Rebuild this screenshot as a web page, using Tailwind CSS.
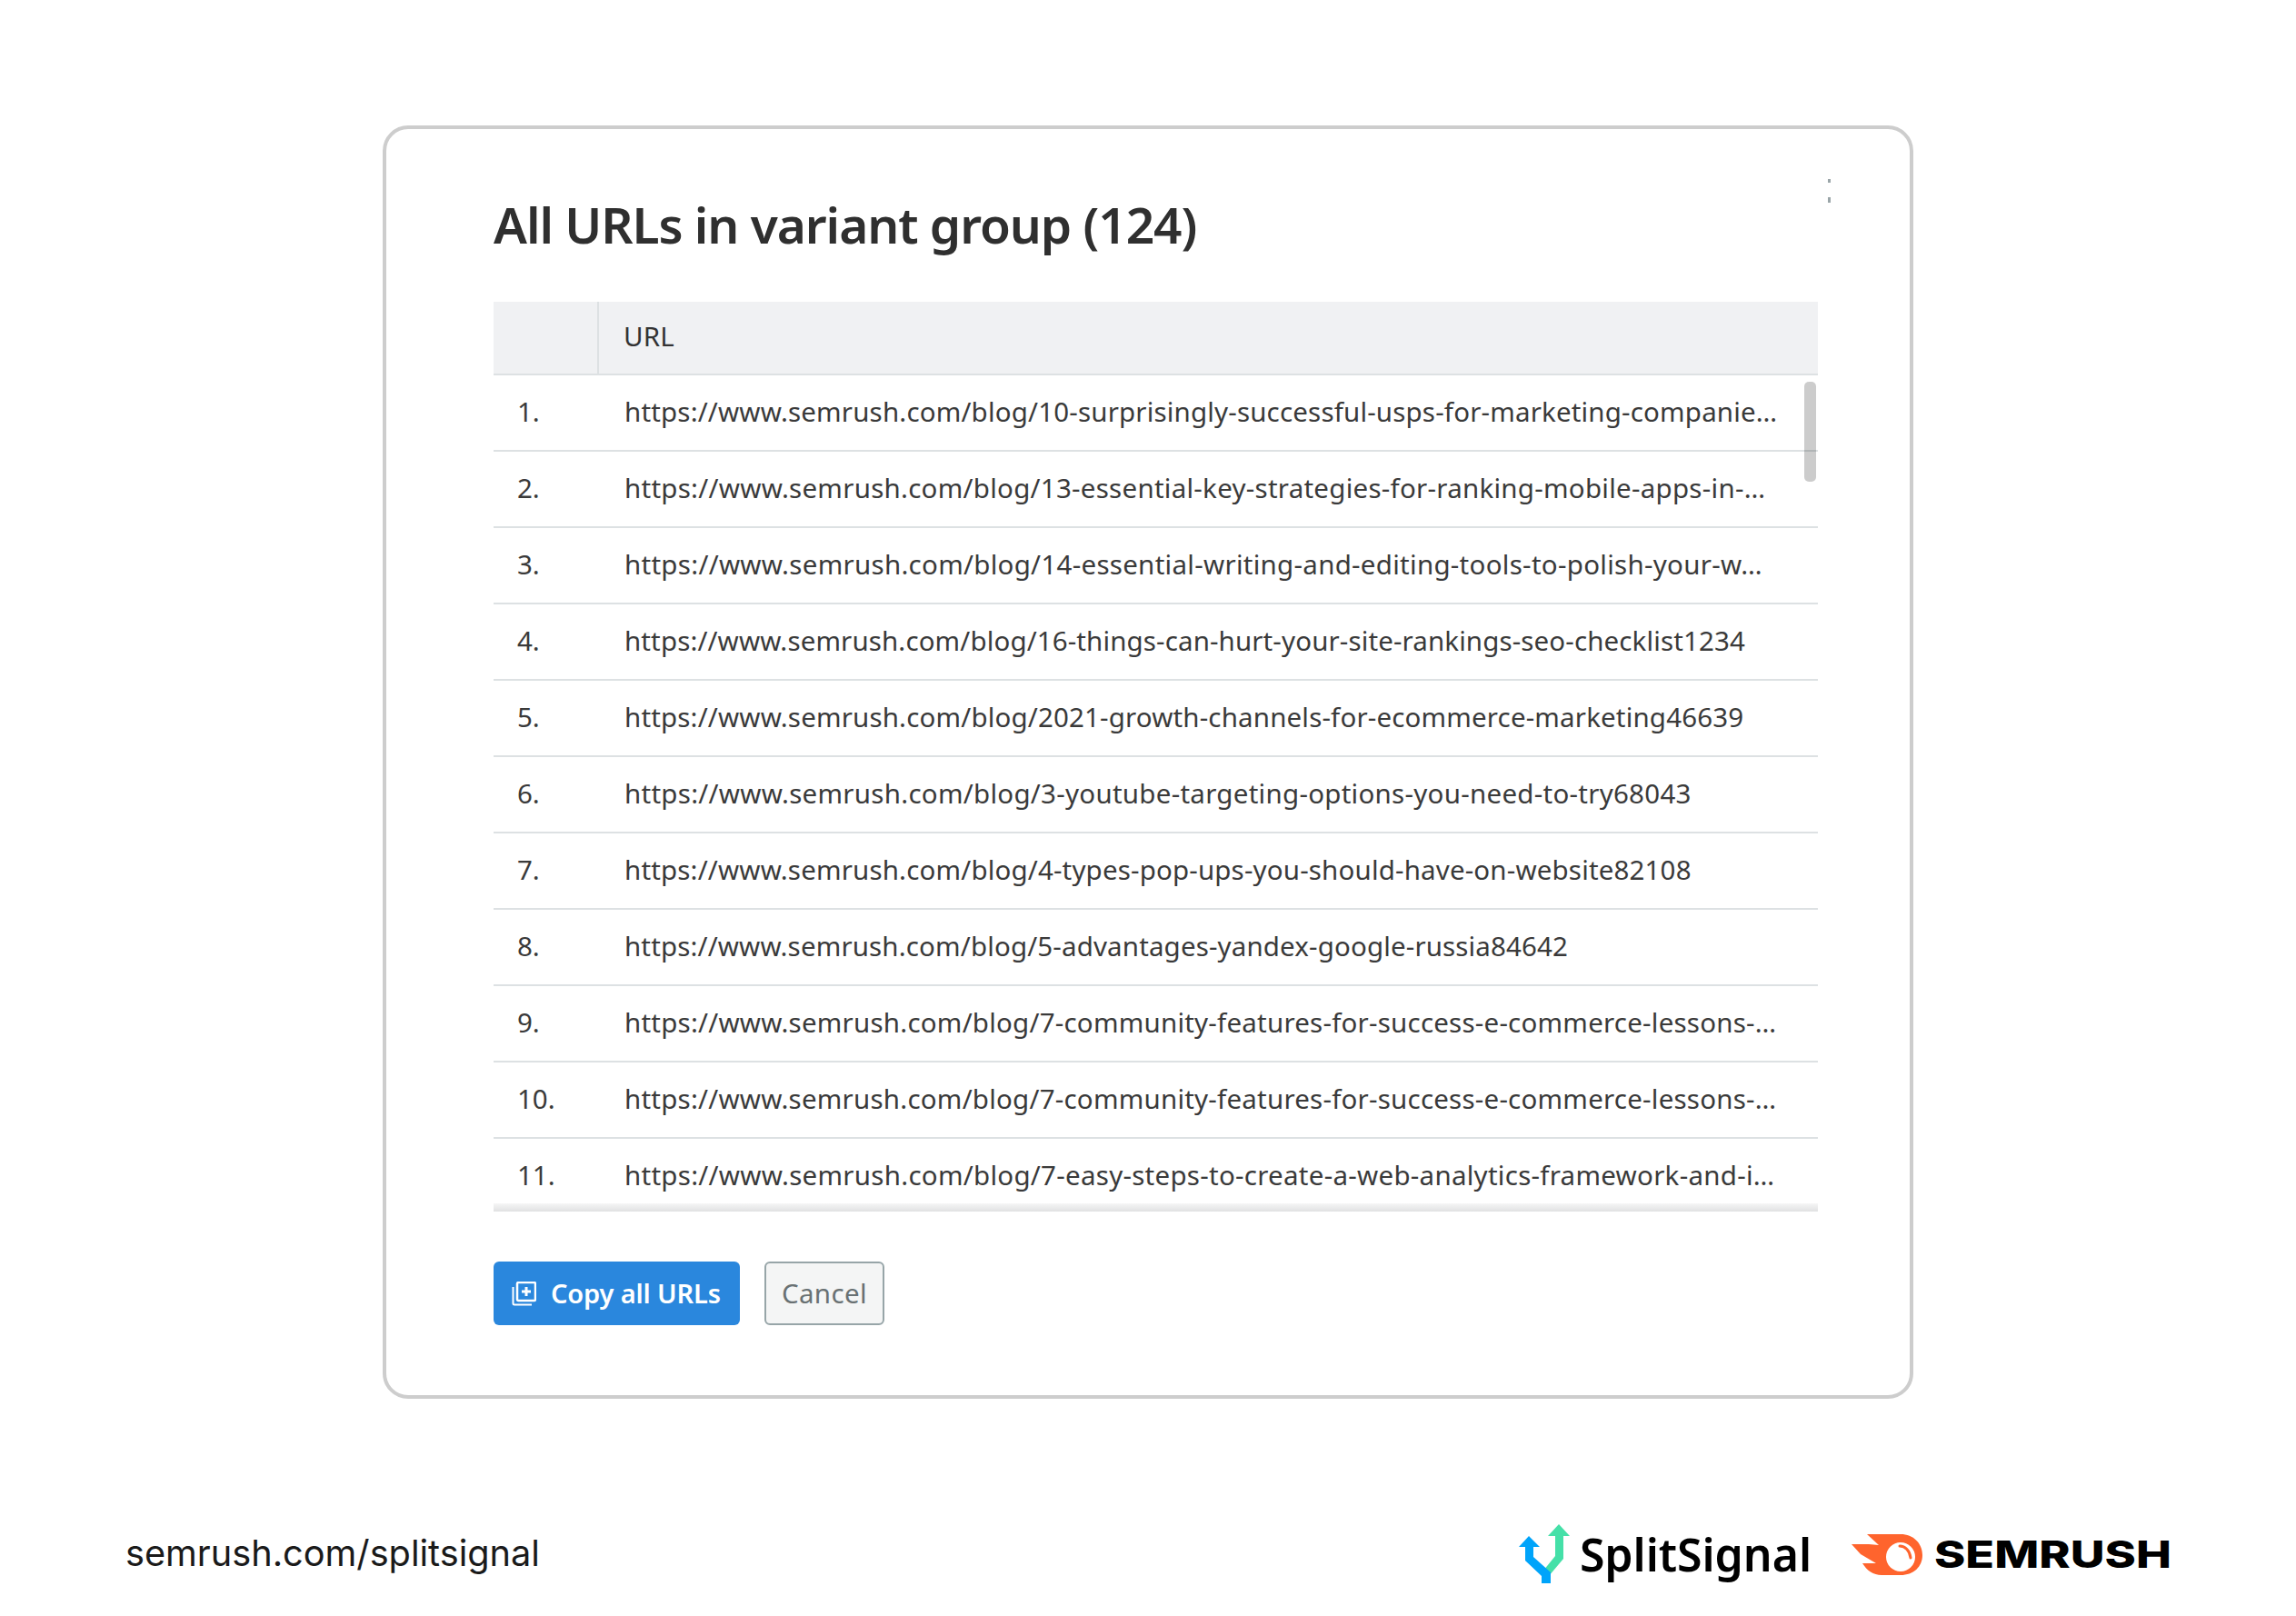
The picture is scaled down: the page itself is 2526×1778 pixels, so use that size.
<!DOCTYPE html>
<html lang="en">
<head>
<meta charset="UTF-8">
<title>All URLs in variant group</title>
<script src="https://cdn.jsdelivr.net/npm/@tailwindcss/browser@4"></script>
</head>
<body class="bg-white w-[2526px] h-[1778px] overflow-hidden font-['Noto_Sans',sans-serif] text-[#333]">
  <!-- Dialog card -->
  <div class="relative ml-[421px] mt-[138px] w-[1684px] h-[1401px] border-4 border-[#cdcdcd] rounded-[28px] pl-[118px]">
    <div class="absolute left-[1586px] top-[55px] flex flex-col gap-[16px]">
      <span class="block w-[3px] h-[4px] bg-[#9aa5a8]"></span>
      <span class="block w-[3px] h-[6px] bg-[#9aa5a8]"></span>
    </div>
    <h1 class="pt-[67px] h-[190px] text-[55px] leading-[76px] font-semibold tracking-[-1.05px] text-[#2f2f2f]">All URLs in variant group (124)</h1>

    <div class="relative w-[1457px]">
      <!-- Header -->
      <div class="flex h-[81px] bg-[#f0f1f3] border-b-2 border-[#dde1e3] text-[29.5px] tracking-[0.13px]">
        <div class="w-[116px] border-r-2 border-[#dde1e3]"></div>
        <div class="pl-[27px] leading-[76px]">URL</div>
      </div>
      <!-- Rows -->
      <div class="h-[920px] overflow-hidden text-[29.5px] text-[#3a3a3a]">
        <div class="flex h-[84px] pb-[2px] items-center border-b-2 border-[#dde1e3] whitespace-nowrap"><div class="w-[116px] pl-[26px]">1.</div><div class="pl-[28px] tracking-[0.17px]">https://www.semrush.com/blog/10-surprisingly-successful-usps-for-marketing-companie…</div></div>
        <div class="flex h-[84px] pb-[2px] items-center border-b-2 border-[#dde1e3] whitespace-nowrap"><div class="w-[116px] pl-[26px]">2.</div><div class="pl-[28px] tracking-[0.26px]">https://www.semrush.com/blog/13-essential-key-strategies-for-ranking-mobile-apps-in-…</div></div>
        <div class="flex h-[84px] pb-[2px] items-center border-b-2 border-[#dde1e3] whitespace-nowrap"><div class="w-[116px] pl-[26px]">3.</div><div class="pl-[28px] tracking-[0.28px]">https://www.semrush.com/blog/14-essential-writing-and-editing-tools-to-polish-your-w…</div></div>
        <div class="flex h-[84px] pb-[2px] items-center border-b-2 border-[#dde1e3] whitespace-nowrap"><div class="w-[116px] pl-[26px]">4.</div><div class="pl-[28px] tracking-[0.12px]">https://www.semrush.com/blog/16-things-can-hurt-your-site-rankings-seo-checklist1234</div></div>
        <div class="flex h-[84px] pb-[2px] items-center border-b-2 border-[#dde1e3] whitespace-nowrap"><div class="w-[116px] pl-[26px]">5.</div><div class="pl-[28px] tracking-[0.16px]">https://www.semrush.com/blog/2021-growth-channels-for-ecommerce-marketing46639</div></div>
        <div class="flex h-[84px] pb-[2px] items-center border-b-2 border-[#dde1e3] whitespace-nowrap"><div class="w-[116px] pl-[26px]">6.</div><div class="pl-[28px] tracking-[0.27px]">https://www.semrush.com/blog/3-youtube-targeting-options-you-need-to-try68043</div></div>
        <div class="flex h-[84px] pb-[2px] items-center border-b-2 border-[#dde1e3] whitespace-nowrap"><div class="w-[116px] pl-[26px]">7.</div><div class="pl-[28px] tracking-[0.16px]">https://www.semrush.com/blog/4-types-pop-ups-you-should-have-on-website82108</div></div>
        <div class="flex h-[84px] pb-[2px] items-center border-b-2 border-[#dde1e3] whitespace-nowrap"><div class="w-[116px] pl-[26px]">8.</div><div class="pl-[28px] tracking-[0.14px]">https://www.semrush.com/blog/5-advantages-yandex-google-russia84642</div></div>
        <div class="flex h-[84px] pb-[2px] items-center border-b-2 border-[#dde1e3] whitespace-nowrap"><div class="w-[116px] pl-[26px]">9.</div><div class="pl-[28px] tracking-[0.22px]">https://www.semrush.com/blog/7-community-features-for-success-e-commerce-lessons-…</div></div>
        <div class="flex h-[84px] pb-[2px] items-center border-b-2 border-[#dde1e3] whitespace-nowrap"><div class="w-[116px] pl-[26px]">10.</div><div class="pl-[28px] tracking-[0.22px]">https://www.semrush.com/blog/7-community-features-for-success-e-commerce-lessons-…</div></div>
        <div class="flex h-[84px] pb-[2px] items-center border-b-2 border-[#dde1e3] whitespace-nowrap"><div class="w-[116px] pl-[26px]">11.</div><div class="pl-[28px] tracking-[0.27px]">https://www.semrush.com/blog/7-easy-steps-to-create-a-web-analytics-framework-and-i…</div></div>
      </div>
      <!-- Scrollbar thumb and bottom scroll shadow -->
      <div class="absolute left-[1442px] top-[88px] w-[13px] h-[110px] rounded-[5px] bg-black/20"></div>
      <div class="absolute left-0 right-0 bottom-0 h-[9px] bg-gradient-to-b from-[#f6f6f6] to-[#e0e1e2]"></div>
    </div>

    <!-- Buttons -->
    <div class="flex gap-[27px] mt-[55px]">
      <button class="flex items-center w-[271px] h-[70px] pl-[20px] gap-[16px] rounded-[6px] bg-[#2a87dd] text-white text-[29px] font-semibold tracking-[-0.15px]">
        <svg class="w-[27px] h-[27px]" viewBox="0 0 27 27" fill="none">
          <rect x="6" y="1" width="20" height="20" rx="1.5" stroke="white" stroke-width="2.5"/>
          <path d="M16 6v10M11 11h10" stroke="white" stroke-width="3"/>
          <path d="M1.5 6v18a1.5 1.5 0 0 0 1.5 1.5h19" stroke="white" stroke-width="2"/>
        </svg>
        <span>Copy all URLs</span>
      </button>
      <button class="w-[132px] h-[70px] rounded-[6px] border-2 border-[#97a5a8] bg-[#f4f5f5] text-[#697173] text-[29.5px] tracking-[0.4px]">Cancel</button>
    </div>
  </div>

  <!-- Footer -->
  <div class="flex items-center justify-between w-[2252px] ml-[138px] mt-[131px] h-[80px]">
    <div class="font-['Inter',sans-serif] text-[39.7px] text-[#1a1a1a]">semrush.com/splitsignal</div>
    <div class="flex items-center">
      <svg class="w-[64px] h-[68px]" viewBox="1672 1674 64 68">
        <path d="M1717 1675l12 13h-7v25l-16 19-6-6 13-16v-22h-8z" fill="#45e0a8"/>
        <path d="M1684 1688l12 12h-7v11l19 17v12h-10v-8l-18-17v-15h-7z" fill="#00a4fa"/>
      </svg>
      <span class="ml-[4px] font-['Noto_Sans',sans-serif] font-semibold text-[50px] tracking-[-0.05px] text-black">SplitSignal</span>
      <svg class="ml-[44px] w-[78px] h-[45px]" viewBox="0 0 78 45">
        <path d="M17 0H54C68 0 78 10 78 23C78 36 68 45 54 45H33C24 45 17 40 12 32H27L10 22L0 11H19L30 12z" fill="#ff642d"/>
        <circle cx="54" cy="25" r="16" fill="white"/>
        <path d="M53 13c6 0 11 5 12 13" fill="none" stroke="#ff642d" stroke-width="3" stroke-linecap="round"/>
      </svg>
      <span class="ml-[13px] w-[262px] inline-block origin-left scale-x-[1.27] font-['Inter',sans-serif] font-extrabold text-[41px] leading-none text-black">SEMRUSH</span>
    </div>
  </div>
</body>
</html>
